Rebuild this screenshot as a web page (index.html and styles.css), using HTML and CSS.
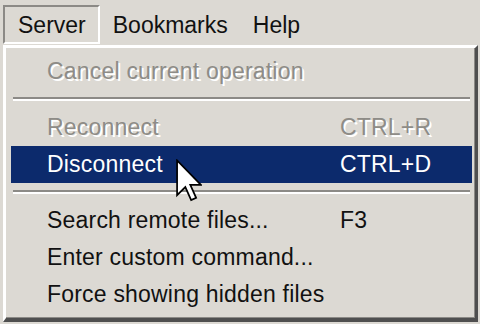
FILE: index.html
```html
<!DOCTYPE html>
<html lang="en">

<head>
    <meta charset="UTF-8">
    <title>Server menu</title>
    <link rel="stylesheet" href="styles.css">
</head>

<body>

    <div class="menubar">
        <div class="menubar__item menubar__item--open">Server</div>
        <div class="menubar__item">Bookmarks</div>
        <div class="menubar__item">Help</div>
    </div>

    <div class="dropdown">
        <div class="dropdown__item dropdown__item--disabled">
            <span class="dropdown__label">Cancel current operation</span>
        </div>
        <div class="dropdown__sep"></div>
        <div class="dropdown__item dropdown__item--disabled">
            <span class="dropdown__label">Reconnect</span>
            <span class="dropdown__key">CTRL+R</span>
        </div>
        <div class="dropdown__item dropdown__item--active">
            <span class="dropdown__label">Disconnect</span>
            <span class="dropdown__key">CTRL+D</span>
            <svg class="cursor" width="26" height="44" viewBox="0 0 12 20">
                <path d="M0.5 0.5 L0.5 16.5 L4.3 12.8 L7 18.8 L9.3 17.8 L6.6 11.8 L11.5 11.8 Z" fill="#fff" stroke="#000" stroke-width="0.8" stroke-linejoin="miter"/>
            </svg>
        </div>
        <div class="dropdown__sep"></div>
        <div class="dropdown__item">
            <span class="dropdown__label">Search remote files...</span>
            <span class="dropdown__key">F3</span>
        </div>
        <div class="dropdown__item">
            <span class="dropdown__label">Enter custom command...</span>
        </div>
        <div class="dropdown__item">
            <span class="dropdown__label">Force showing hidden files</span>
        </div>
    </div>

</body>

</html>
```

FILE: styles.css
```css
html {
    box-sizing: border-box;
    background: #dcd9d3;
}

*,
*:before,
*:after {
    box-sizing: inherit;
}

body {
    margin: 0;
    width: 480px;
    height: 324px;
    overflow: hidden;
    font-family: 'Liberation Sans', Arial, sans-serif;
    font-size: 23px;
    color: #111;
}

.menubar {
    display: flex;
    height: 45px;
    padding: 5px 0 0 3px;
    background: #dcd9d3;
}

.menubar__item {
    height: 39px;
    padding: 0 10px 0 11px;
    line-height: 37px;
    border: 2px solid transparent;
}

.menubar__item--open {
    padding: 0 12px 0 13px;
    border-top-color: #8c8a86;
    border-left-color: #8c8a86;
    border-right-color: #fff;
    border-bottom-color: #fff;
}

.dropdown {
    position: relative;
    margin-left: 3px;
    width: 475px;
    height: 277px;
    padding: 5px 3px 0 5px;
    background: #dcd9d3;
    border-top: 3px solid #fff;
    border-left: 3px solid #fff;
    border-right: 3px solid #4f4f4f;
    border-bottom: 4px solid #4f4f4f;
    box-shadow: inset -1px -1px 0 #8c8a86;
    letter-spacing: 0.2px;
}

.dropdown__item {
    position: relative;
    display: flex;
    height: 37px;
    line-height: 37px;
    padding-left: 36px;
}

.dropdown__label {
    width: 293px;
    white-space: nowrap;
}

.dropdown__item--disabled {
    color: #8e8c87;
    text-shadow: 2px 2px 0 #fff;
}

.dropdown__item--active {
    background: #0c2a6c;
    color: #fff;
}

.dropdown__sep {
    height: 19px;
    margin: 0 2px;
    padding-top: 7px;
}

.dropdown__sep:before {
    content: '';
    display: block;
    height: 2px;
    background: #8c8a86;
    border-bottom: 2px solid #fff;
    box-sizing: content-box;
}

.cursor {
    position: absolute;
    left: 165px;
    top: 13px;
}
```
